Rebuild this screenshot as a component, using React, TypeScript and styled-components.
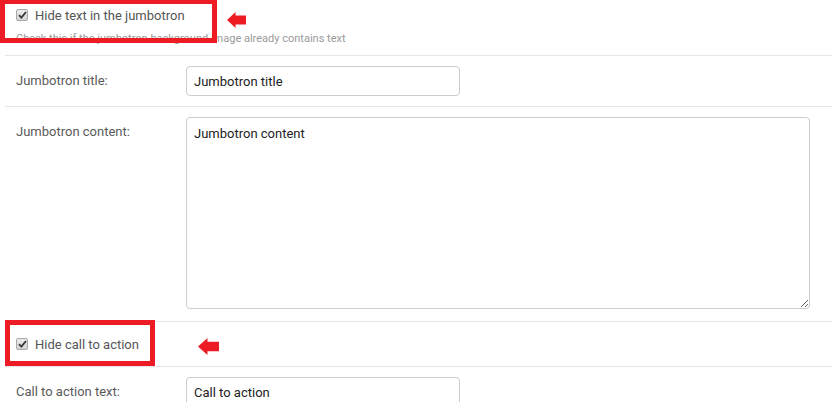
import styled, { createGlobalStyle } from "styled-components"

const GlobalStyle = createGlobalStyle`
    body {
        margin: 0;
        background: #ffffff;
        font-family: Roboto, "Liberation Sans", Arial, sans-serif;
    }
`

const Page = styled.div`
    position: relative;
    width: 832px;
    height: 402px;
    overflow: hidden;
    padding-left: 5px;
    box-sizing: border-box;
`

const CheckRow = styled.div<{ $pt: number; $pb: number }>`
    padding: ${p => p.$pt}px 11px ${p => p.$pb}px 11px;
    border-bottom: 1px solid #e6e6e6;
`

const CheckLine = styled.label`
    display: flex;
    align-items: center;
    gap: 7px;
    height: 12px;
    font-size: 13px;
    color: #555555;
`

const Box = styled.span`
    width: 12px;
    height: 12px;
    box-sizing: border-box;
    border: 1px solid #a8a8a8;
    border-radius: 2px;
    background: linear-gradient(#ececec, #d4d4d4);
    display: flex;
    align-items: center;
    justify-content: center;
`

const Help = styled.div`
    margin-top: 11px;
    font-size: 11px;
    line-height: 13px;
    color: #9a9a9a;
`

const FieldRow = styled.div<{ $pb?: number }>`
    display: grid;
    grid-template-columns: 170px 274px;
    padding: 10px 22px ${p => p.$pb ?? 10}px 11px;
    border-bottom: 1px solid #e6e6e6;
    align-items: start;
`

const AreaRow = styled(FieldRow)`
    grid-template-columns: 170px 1fr;
`

const Label = styled.div`
    font-size: 13px;
    line-height: 30px;
    color: #5a5a5a;
`

const TextInput = styled.input`
    height: 30px;
    box-sizing: border-box;
    width: 100%;
    border: 1px solid #cccccc;
    border-radius: 4px;
    padding: 0 7px;
    font-family: inherit;
    font-size: 13px;
    color: #222222;
    outline: none;
`

const TextArea = styled.textarea`
    height: 192px;
    box-sizing: border-box;
    width: 100%;
    border: 1px solid #cccccc;
    border-radius: 4px;
    padding: 7px 7px;
    font-family: inherit;
    font-size: 13px;
    line-height: 18px;
    color: #222222;
    outline: none;
    display: block;
`

const Highlight = styled.div<{ $l: number; $t: number; $w: number; $h: number }>`
    position: absolute;
    left: ${p => p.$l}px;
    top: ${p => p.$t}px;
    width: ${p => p.$w}px;
    height: ${p => p.$h}px;
    border: 5px solid #ed1c24;
    box-sizing: border-box;
`

const Arrow = styled.svg<{ $l: number; $t: number }>`
    position: absolute;
    left: ${p => p.$l}px;
    top: ${p => p.$t}px;
`

const Check = () => (
    <Box>
        <svg width="9" height="8" viewBox="0 0 9 8">
            <path d="M1 4.2 L3.4 6.6 L8 1" fill="none" stroke="#3a3a3a" strokeWidth="1.9" />
        </svg>
    </Box>
)

const RedArrow = ({ l, t, w, h }: { l: number; t: number; w: number; h: number }) => (
    <Arrow $l={l} $t={t} width={w} height={h} viewBox="0 0 20 16" preserveAspectRatio="none">
        <polygon points="0,8 9,0 9,3.5 20,3.5 20,12.5 9,12.5 9,16" fill="#ed1c24" />
    </Arrow>
)

export default function App() {
    return (
        <Page>
            <GlobalStyle />
            <CheckRow $pt={9} $pb={10}>
                <CheckLine>
                    <Check />
                    Hide text in the jumbotron
                </CheckLine>
                <Help>Check this if the jumbotron background image already contains text</Help>
            </CheckRow>
            <FieldRow>
                <Label>Jumbotron title:</Label>
                <TextInput defaultValue="Jumbotron title" />
            </FieldRow>
            <AreaRow $pb={12}>
                <Label>Jumbotron content:</Label>
                <TextArea defaultValue="Jumbotron content" />
            </AreaRow>
            <CheckRow $pt={16} $pb={16}>
                <CheckLine>
                    <Check />
                    Hide call to action
                </CheckLine>
            </CheckRow>
            <FieldRow>
                <Label>Call to action text:</Label>
                <TextInput defaultValue="Call to action" />
            </FieldRow>

            <Highlight $l={0} $t={-1} $w={217} $h={44} />
            <RedArrow l={227} t={12} w={19} h={16} />
            <Highlight $l={5} $t={320} $w={150} $h={46} />
            <RedArrow l={198} t={338} w={21} h={17} />
        </Page>
    )
}
